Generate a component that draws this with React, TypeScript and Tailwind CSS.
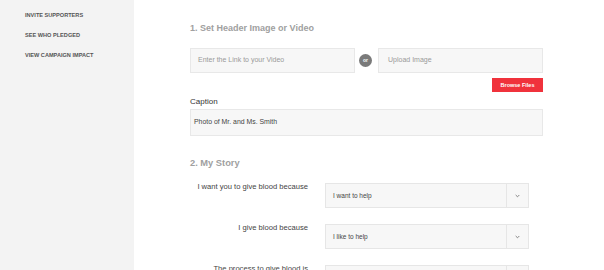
import React from "react";

const font = { fontFamily: '"Liberation Sans", Arial, sans-serif' };

function Select({ value }: { value: string }) {
  return (
    <div className="ml-[17px] flex h-[25px] w-[204px] items-center border border-[#e6e6e6] bg-[#f7f7f7]">
      <div className="flex-1 pl-[7px] text-[6.5px] text-[#444]">{value}</div>
      <div className="flex h-full w-[22px] items-center justify-center border-l border-[#e6e6e6]">
        <svg width="5" height="4" viewBox="0 0 5 4">
          <path d="M0.7 1 L2.5 2.8 L4.3 1" fill="none" stroke="#777" strokeWidth="0.9" />
        </svg>
      </div>
    </div>
  );
}

function StoryRow({ label, value }: { label: string; value: string }) {
  return (
    <div className="mb-[16px] flex items-start">
      <div className="w-[118px] text-right text-[7.6px] leading-[8px] text-[#444]">{label}</div>
      <Select value={value} />
    </div>
  );
}

export default function App() {
  return (
    <div className="flex h-[270px] w-[604px] overflow-hidden bg-white" style={font}>
      <aside className="w-[134px] shrink-0 bg-[#f3f3f3] pl-[25px] pt-[5px]">
        {["INVITE SUPPORTERS", "SEE WHO PLEDGED", "VIEW CAMPAIGN IMPACT"].map((t) => (
          <div key={t} className="text-[5.6px] font-bold leading-[20px] text-[#555]">
            {t}
          </div>
        ))}
      </aside>
      <main className="flex-1 bg-white">
        <div className="ml-[56px] w-[353px] pt-[22px]">
          <h2 className="text-[9px] font-bold leading-[12px] text-[#a0a0a0]">1. Set Header Image or Video</h2>
          <div className="mt-[14px] flex items-center">
            <div className="flex h-[25px] w-[165px] items-center border border-[#e8e8e8] bg-[#f7f7f7] pl-[7px] text-[7px] text-[#9a9a9a]">
              Enter the Link to your Video
            </div>
            <div className="ml-[4px] mr-[6px] flex h-[13px] w-[13px] items-center justify-center rounded-full bg-[#7a7a7a] text-[5px] font-bold text-white">
              or
            </div>
            <div className="flex h-[25px] w-[165px] items-center border border-[#e8e8e8] bg-[#f7f7f7] pl-[9px] text-[7px] text-[#9a9a9a]">
              Upload Image
            </div>
          </div>
          <div className="mt-[5px] flex justify-end">
            <div className="flex h-[14px] w-[51px] items-center justify-center bg-[#f0323c] text-[5.5px] font-bold text-white">
              Browse Files
            </div>
          </div>
          <div className="mt-[5px] text-[8px] leading-[10px] text-[#333]">Caption</div>
          <div className="mt-[2px] flex h-[27px] items-center border border-[#e8e8e8] bg-[#f7f7f7] pl-[3px] text-[6.9px] text-[#444]">
            Photo of Mr. and Ms. Smith
          </div>
          <h2 className="mt-[21px] text-[9.3px] font-bold leading-[12px] text-[#a0a0a0]">2. My Story</h2>
          <div className="mt-[14px]">
            <StoryRow label="I want you to give blood because" value="I want to help" />
            <StoryRow label="I give blood because" value="I like to help" />
            <StoryRow label="The process to give blood is" value="" />
          </div>
        </div>
      </main>
    </div>
  );
}
